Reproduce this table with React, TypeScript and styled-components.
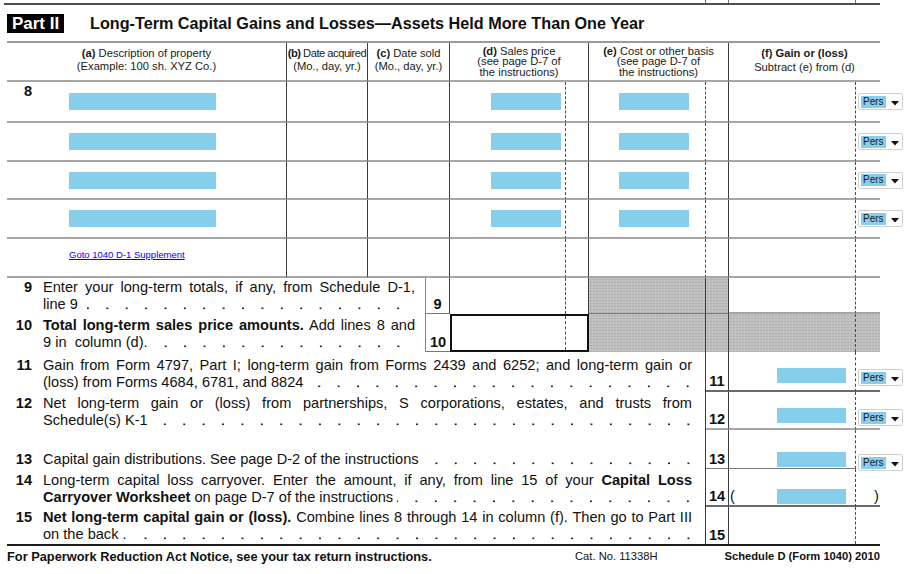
import React from 'react';
import styled, { createGlobalStyle, css } from 'styled-components';

const GlobalStyle = createGlobalStyle`
  html, body { margin: 0; padding: 0; background: #ffffff; }
  body { font-family: "Liberation Sans", Arial, Helvetica, sans-serif; color: #111; }
  *, *::before, *::after { box-sizing: border-box; }
`;

const COLS = '280px 81px 58px 24px 116px 23px 117px 23px 127px 24px';
const FONT = '"Liberation Sans", Arial, Helvetica, sans-serif';

type V = 'none' | 'solid' | 'dashed' | 'soft';
type H = 'none' | 'rule' | 'soft' | 'dark';

const vline: Record<V, string> = {
  none: 'none',
  solid: '1px solid #3c3c3c',
  dashed: '1px dashed #4a4a4a',
  soft: '1px solid #858585',
};
const hline: Record<H, string> = {
  none: 'none',
  rule: '2px solid #a6a6a6',
  soft: '1px solid #777777',
  dark: '2px solid #6a6a6a',
};

const Page = styled.div`
  width: 906px;
  height: 574px;
  overflow: hidden;
  font-family: ${FONT};
`;

const TopRule = styled.div`
  display: grid;
  grid-template-columns: 283px 81px 58px 24px 116px 23px 117px 23px 127px 24px;
  width: 876px;
  height: 5px;
  margin-left: 4px;
  border-bottom: 2px solid #4d4d4d;
`;

const Tick = styled.div<{ $tick?: boolean }>`
  border-right: ${p => (p.$tick ? '1px solid #777' : 'none')};
`;

const PartHeader = styled.div`
  display: flex;
  align-items: center;
  height: 36px;
  padding-left: 7px;
  gap: 26px;
`;

const PartBadge = styled.div`
  width: 57px;
  height: 19px;
  background: #000;
  color: #fff;
  font-weight: bold;
  font-size: 17px;
  line-height: 19px;
  text-align: center;
`;

const PartTitle = styled.h2`
  margin: 0;
  font-size: 16.2px;
  font-weight: bold;
  color: #111;
`;

const Table = styled.div`
  display: grid;
  grid-template-columns: ${COLS};
  grid-template-rows: 39px 41px 39px 38px 39px 39px 36px 38px 40px 38px 39px 38px 37px;
  width: 873px;
  margin-left: 7px;
  border-top: 2px solid #9a9a9a;
  border-bottom: 2px solid #1c1c1c;
`;

const shade = css`
  background-color: #bdbdbd;
  background-image: repeating-linear-gradient(0deg, rgba(0, 0, 0, 0.06) 0 1px, transparent 1px 3px),
    repeating-linear-gradient(90deg, rgba(255, 255, 255, 0.16) 0 1px, transparent 1px 3px);
`;

const Cell = styled.div<{ $span?: number; $r?: V; $b?: H; $shade?: boolean }>`
  grid-column: span ${p => p.$span ?? 1};
  min-width: 0;
  display: flex;
  border-right: ${p => vline[p.$r ?? 'none']};
  border-bottom: ${p => hline[p.$b ?? 'none']};
  ${p => p.$shade && shade}
`;

const HeadCell = styled(Cell)<{ $lh: number; $pt: number }>`
  flex-direction: column;
  align-items: center;
  padding-top: ${p => p.$pt}px;
  font-size: 11.2px;
  line-height: ${p => p.$lh}px;
  color: #1a1a1a;
  text-align: center;
  white-space: nowrap;
`;

const Squeeze = styled.span`
  letter-spacing: -0.5px;
`;

const B = styled.b`
  font-weight: bold;
`;

const DescCell = styled(Cell)`
  align-items: center;
`;

const NumSlot = styled.span`
  width: 25px;
  flex-shrink: 0;
  align-self: flex-start;
  margin-top: 1px;
  text-align: right;
  font-weight: bold;
  font-size: 14.6px;
  line-height: 17px;
`;

const Field = styled.div<{ $w: number; $h?: number; $ml?: number; $mr?: number; $mb?: number }>`
  flex-shrink: 0;
  width: ${p => p.$w}px;
  height: ${p => p.$h ?? 17}px;
  margin-left: ${p => p.$ml ?? 0}px;
  margin-right: ${p => p.$mr ?? 0}px;
  margin-bottom: ${p => p.$mb ?? 0}px;
  background: #87ceeb;
`;

const AmountCell = styled(Cell)<{ $end?: boolean }>`
  justify-content: flex-end;
  align-items: ${p => (p.$end ? 'flex-end' : 'center')};
`;

const LinkCell = styled(Cell)`
  padding: 10px 0 0 62px;
`;

const SuppLink = styled.a`
  font-size: 9.5px;
  line-height: 11px;
  height: 12px;
  color: #0000ff;
  text-decoration: underline;
  text-underline-offset: 1px;
`;

const MarginCell = styled(Cell)<{ $end?: boolean }>`
  align-items: ${p => (p.$end ? 'flex-end' : 'center')};
  overflow: visible;
`;

const PersBox = styled.div<{ $mb?: number }>`
  flex-shrink: 0;
  display: flex;
  align-items: center;
  width: 45px;
  height: 17px;
  margin-left: 2px;
  margin-bottom: ${p => p.$mb ?? 0}px;
  padding-left: 2px;
  background: #fff;
  border: 1px solid #cfcfcf;
  border-radius: 2px;
  position: relative;
  z-index: 1;
`;

const PersTag = styled.span`
  height: 12px;
  padding: 0 2px;
  background: #87ceeb;
  color: #1a1a1a;
  font-size: 10px;
  line-height: 12px;
`;

const Caret = styled.svg`
  margin-left: auto;
  margin-right: 3px;
  margin-top: 3px;
`;

const TextCell = styled(Cell)<{ $pr: number }>`
  flex-direction: column;
  justify-content: flex-end;
  padding: 0 ${p => p.$pr}px 1px 0;
  font-size: 14.6px;
  line-height: 17px;
  color: #111;
`;

const Item = styled.div`
  display: flex;
  align-items: flex-start;
`;

const ItemNum = styled.span`
  width: 25px;
  flex-shrink: 0;
  margin-right: 11px;
  text-align: right;
  font-weight: bold;
`;

const ItemBody = styled.div`
  flex: 1;
  min-width: 0;
`;

const FullLine = styled.div`
  text-align: justify;
  text-align-last: justify;
`;

const LastLine = styled.div`
  display: flex;
  white-space: pre;
`;

const Leader = styled.span<{ $end: number }>`
  flex: 1;
  margin-left: 4px;
  margin-right: ${p => p.$end}px;
  background-image: radial-gradient(circle at 17.4px 12.4px, #222 0 0.8px, rgba(0, 0, 0, 0) 1.25px);
  background-size: 19.4px 17px;
  background-repeat: repeat-x;
  background-position: right top;
`;

const LineLabel = styled(Cell)`
  justify-content: center;
  align-items: flex-end;
  font-weight: bold;
  font-size: 14.6px;
  line-height: 17px;
`;

const TotalBox = styled.div`
  grid-column: span 2;
  display: grid;
  grid-template-columns: 114px 1fr;
  border: 2px solid #111;
`;

const BoxPart = styled.div<{ $dash?: boolean }>`
  border-right: ${p => (p.$dash ? '1px dashed #4a4a4a' : 'none')};
`;

const ParenCell = styled(Cell)<{ $pl: number }>`
  align-items: flex-end;
  justify-content: space-between;
  padding-left: ${p => p.$pl}px;
  font-size: 14.6px;
  line-height: 17px;
`;

const Footer = styled.div`
  display: grid;
  grid-template-columns: 568px 148px auto;
  align-items: center;
  width: 873px;
  height: 20px;
  margin-left: 7px;
  color: #111;
`;

const FootNote = styled.span`
  font-weight: bold;
  font-size: 12.8px;
`;

const FootCat = styled.span`
  font-size: 11.2px;
`;

const FootForm = styled.span`
  font-weight: bold;
  font-size: 11.2px;
  text-align: right;
`;

const Pers: React.FC<{ mb?: number }> = ({ mb }) => (
  <PersBox $mb={mb}>
    <PersTag>Pers</PersTag>
    <Caret width="8" height="5" viewBox="0 0 8 5">
      <polygon points="0,0 8,0 4,4.5" fill="#111" />
    </Caret>
  </PersBox>
);

const Row8: React.FC<{ first?: boolean }> = ({ first }) => (
  <>
    <DescCell $r="solid" $b="rule">
      <NumSlot>{first ? '8' : ''}</NumSlot>
      <Field $w={147} $ml={37} />
    </DescCell>
    <Cell $r="solid" $b="rule" />
    <Cell $span={2} $r="solid" $b="rule" />
    <AmountCell $r="dashed" $b="rule">
      <Field $w={70} $mr={4} />
    </AmountCell>
    <Cell $r="solid" $b="rule" />
    <AmountCell $r="dashed" $b="rule">
      <Field $w={70} $mr={16} />
    </AmountCell>
    <Cell $r="solid" $b="rule" />
    <Cell $r="dashed" $b="rule" />
    <MarginCell $b="rule">
      <Pers />
    </MarginCell>
  </>
);

export default function App() {
  return (
    <Page>
      <GlobalStyle />
      <TopRule>
        <Tick />
        <Tick />
        <Tick />
        <Tick />
        <Tick />
        <Tick />
        <Tick $tick />
        <Tick $tick />
        <Tick $tick />
        <Tick />
      </TopRule>

      <PartHeader>
        <PartBadge>Part II</PartBadge>
        <PartTitle>Long-Term Capital Gains and Losses—Assets Held More Than One Year</PartTitle>
      </PartHeader>

      <Table>
        {/* column headings */}
        <HeadCell $r="solid" $b="rule" $lh={13.4} $pt={4}>
          <span>
            <B>(a)</B> Description of property
          </span>
          <span>(Example: 100 sh. XYZ Co.)</span>
        </HeadCell>
        <HeadCell $r="solid" $b="rule" $lh={13.4} $pt={4}>
          <Squeeze>
            <B>(b)</B> Date acquired
          </Squeeze>
          <span>(Mo., day, yr.)</span>
        </HeadCell>
        <HeadCell $span={2} $r="solid" $b="rule" $lh={13.4} $pt={4}>
          <span>
            <B>(c)</B> Date sold
          </span>
          <span>(Mo., day, yr.)</span>
        </HeadCell>
        <HeadCell $span={2} $r="solid" $b="rule" $lh={10.5} $pt={2.5}>
          <span>
            <B>(d)</B> Sales price
          </span>
          <span>(see page D-7 of</span>
          <span>the instructions)</span>
        </HeadCell>
        <HeadCell $span={2} $r="solid" $b="rule" $lh={10.5} $pt={2.5}>
          <span>
            <B>(e)</B> Cost or other basis
          </span>
          <span>(see page D-7 of</span>
          <span>the instructions)</span>
        </HeadCell>
        <HeadCell $span={2} $b="rule" $lh={14.4} $pt={3}>
          <B>(f) Gain or (loss)</B>
          <span>Subtract (e) from (d)</span>
        </HeadCell>

        {/* line 8 */}
        <Row8 first />
        <Row8 />
        <Row8 />
        <Row8 />

        <LinkCell $r="solid" $b="rule">
          <SuppLink href="#">Goto 1040 D-1 Supplement</SuppLink>
        </LinkCell>
        <Cell $r="solid" $b="rule" />
        <Cell $span={2} $r="solid" $b="rule" />
        <Cell $r="dashed" $b="rule" />
        <Cell $r="solid" $b="rule" />
        <Cell $r="dashed" $b="rule" />
        <Cell $r="solid" $b="rule" />
        <Cell $r="dashed" $b="rule" />
        <Cell $b="rule" />

        {/* line 9 */}
        <TextCell $span={3} $r="soft" $pr={10}>
          <Item>
            <ItemNum>9</ItemNum>
            <ItemBody>
              <FullLine>Enter your long-term totals, if any, from Schedule D-1,</FullLine>
              <LastLine>
                line 9<Leader $end={15} />
              </LastLine>
            </ItemBody>
          </Item>
        </TextCell>
        <LineLabel $r="solid" $b="soft">9</LineLabel>
        <Cell $r="dashed" />
        <Cell $r="solid" />
        <Cell $r="solid" $b="soft" $shade />
        <Cell $r="solid" $b="soft" $shade />
        <Cell $r="dashed" $b="rule" />
        <Cell $b="rule" />

        {/* line 10 */}
        <TextCell $span={3} $r="soft" $pr={10}>
          <Item>
            <ItemNum>10</ItemNum>
            <ItemBody>
              <FullLine>
                <B>Total long-term sales price amounts.</B> Add lines 8 and
              </FullLine>
              <LastLine>
                {'9 in  column (d).'}
                <Leader $end={15} />
              </LastLine>
            </ItemBody>
          </Item>
        </TextCell>
        <LineLabel $b="soft">10</LineLabel>
        <TotalBox>
          <BoxPart $dash />
          <BoxPart />
        </TotalBox>
        <Cell $r="solid" $shade />
        <Cell $r="solid" $shade />
        <Cell $r="dashed" $shade />
        <Cell $shade />

        {/* line 11 */}
        <TextCell $span={7} $r="solid" $pr={13}>
          <Item>
            <ItemNum>11</ItemNum>
            <ItemBody>
              <FullLine>
                Gain from Form 4797, Part I; long-term gain from Forms 2439 and 6252; and long-term gain or
              </FullLine>
              <LastLine>
                (loss) from Forms 4684, 6781, and 8824
                <Leader $end={2} />
              </LastLine>
            </ItemBody>
          </Item>
        </TextCell>
        <LineLabel $r="solid" $b="dark">11</LineLabel>
        <AmountCell $end $r="dashed" $b="dark">
          <Field $w={69} $h={15} $mr={9} $mb={7} />
        </AmountCell>
        <MarginCell $end $b="dark">
          <Pers mb={4} />
        </MarginCell>

        {/* line 12 */}
        <TextCell $span={7} $r="solid" $pr={13}>
          <Item>
            <ItemNum>12</ItemNum>
            <ItemBody>
              <FullLine>
                Net long-term gain or (loss) from partnerships, S corporations, estates, and trusts from
              </FullLine>
              <LastLine>
                Schedule(s) K-1
                <Leader $end={2} />
              </LastLine>
            </ItemBody>
          </Item>
        </TextCell>
        <LineLabel $r="solid" $b="rule">12</LineLabel>
        <AmountCell $end $r="dashed" $b="rule">
          <Field $w={69} $h={15} $mr={9} $mb={5} />
        </AmountCell>
        <MarginCell $end $b="rule">
          <Pers mb={2} />
        </MarginCell>

        {/* line 13 */}
        <TextCell $span={7} $r="solid" $pr={13}>
          <Item>
            <ItemNum>13</ItemNum>
            <ItemBody>
              <LastLine>
                Capital gain distributions. See page D-2 of the instructions
                <Leader $end={2} />
              </LastLine>
            </ItemBody>
          </Item>
        </TextCell>
        <LineLabel $r="solid" $b="soft">13</LineLabel>
        <AmountCell $end $r="dashed" $b="soft">
          <Field $w={69} $h={15} $mr={9} $mb={1} />
        </AmountCell>
        <MarginCell $end>
          <Pers mb={-2} />
        </MarginCell>

        {/* line 14 */}
        <TextCell $span={7} $r="solid" $pr={13}>
          <Item>
            <ItemNum>14</ItemNum>
            <ItemBody>
              <FullLine>
                Long-term capital loss carryover. Enter the amount, if any, from line 15 of your{' '}
                <B>Capital Loss</B>
              </FullLine>
              <LastLine>
                <B>Carryover Worksheet</B> on page D-7 of the instructions
                <Leader $end={2} />
              </LastLine>
            </ItemBody>
          </Item>
        </TextCell>
        <LineLabel $r="solid" $b="dark">14</LineLabel>
        <ParenCell $r="dashed" $b="dark" $pl={1}>
          <span>(</span>
          <Field $w={69} $h={15} $mr={9} $mb={1} />
        </ParenCell>
        <ParenCell $b="dark" $pl={18}>
          <span>)</span>
        </ParenCell>

        {/* line 15 */}
        <TextCell $span={7} $r="solid" $pr={13}>
          <Item>
            <ItemNum>15</ItemNum>
            <ItemBody>
              <FullLine>
                <B>Net long-term capital gain or (loss).</B> Combine lines 8 through 14 in column (f). Then go
                to Part III
              </FullLine>
              <LastLine>
                on the back .<Leader $end={2} />
              </LastLine>
            </ItemBody>
          </Item>
        </TextCell>
        <LineLabel $r="solid">15</LineLabel>
        <Cell $r="dashed" />
        <Cell />
      </Table>

      <Footer>
        <FootNote>For Paperwork Reduction Act Notice, see your tax return instructions.</FootNote>
        <FootCat>Cat. No. 11338H</FootCat>
        <FootForm>Schedule D (Form 1040) 2010</FootForm>
      </Footer>
    </Page>
  );
}
